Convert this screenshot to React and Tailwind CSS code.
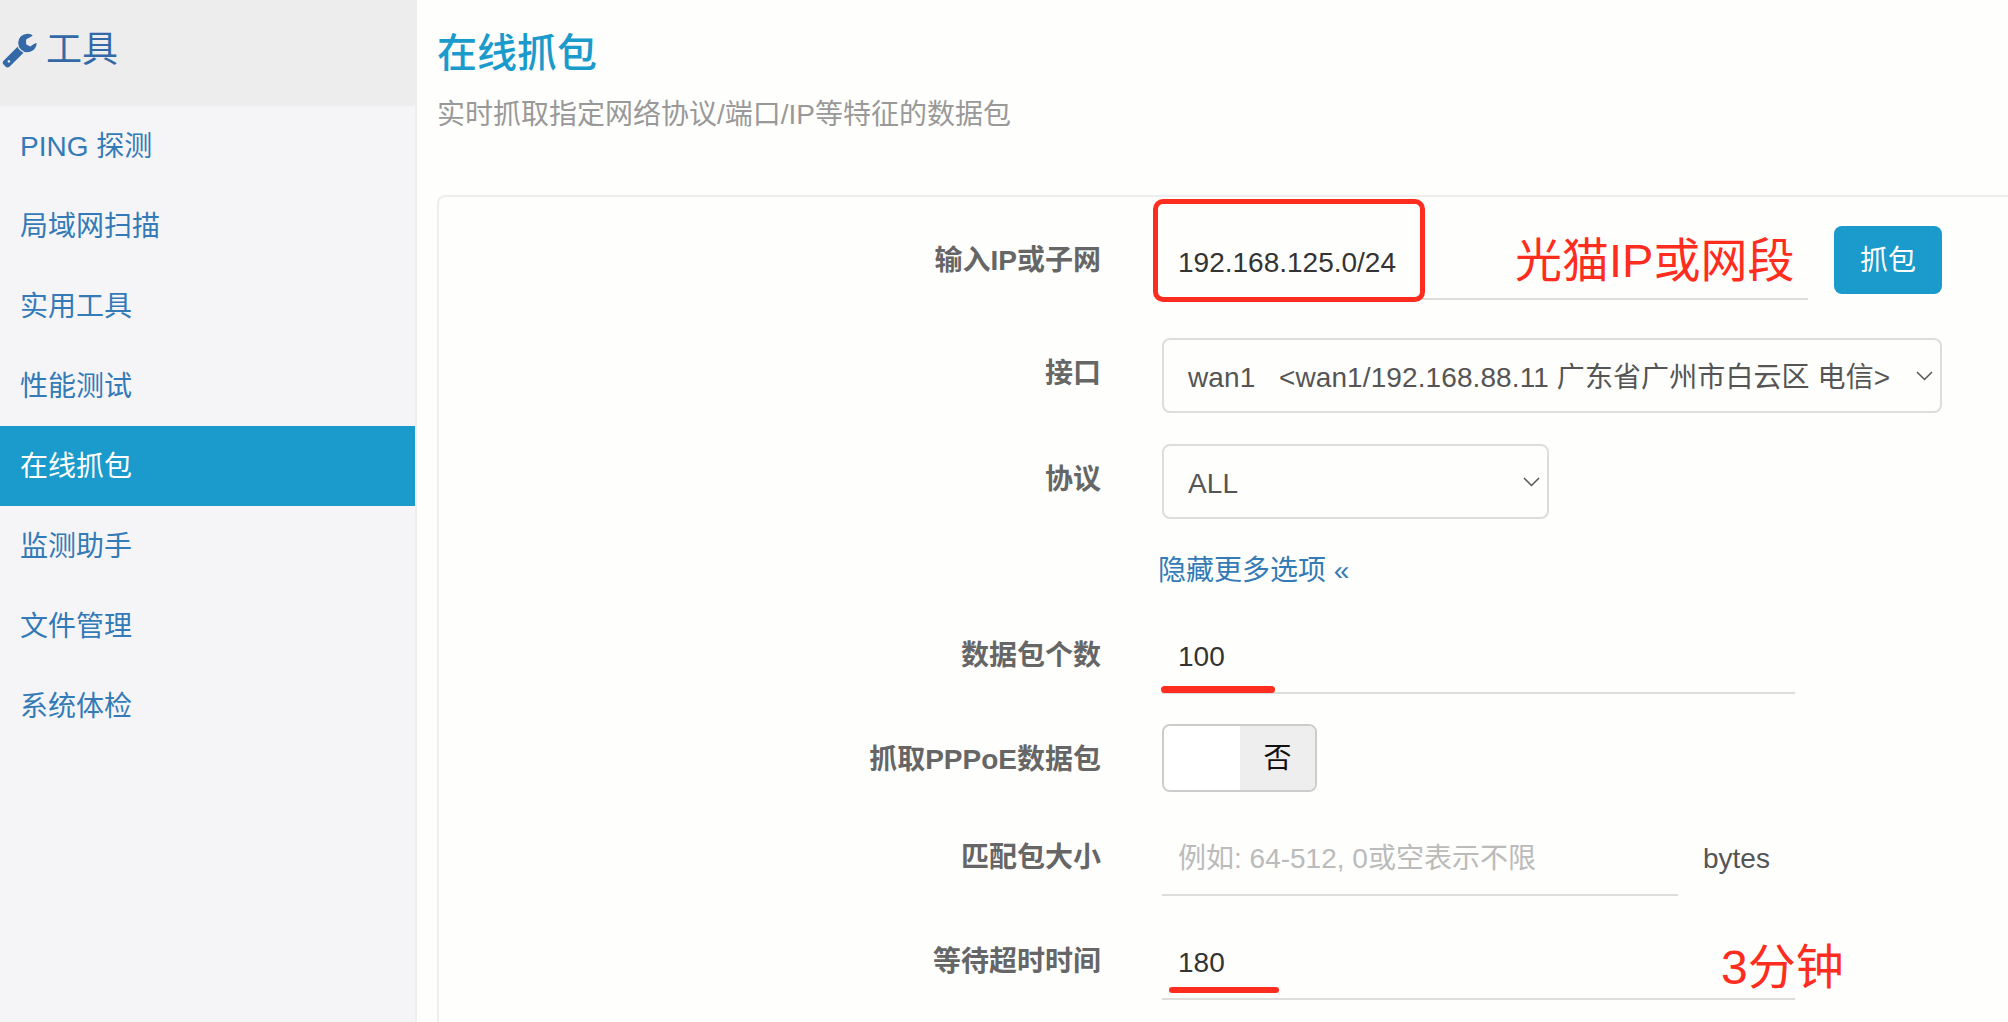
const font = { fontFamily: '"Liberation Sans", "Noto Sans CJK SC", sans-serif' };

const menu = ["PING 探测", "局域网扫描", "实用工具", "性能测试", "在线抓包", "监测助手", "文件管理", "系统体检"];

function WrenchIcon() {
  return (
    <svg width="37" height="37" viewBox="0 0 1792 1792" fill="currentColor" className="mb-[7px] mr-[8px] shrink-0">
      <path d="M448 1472q0-26-19-45t-45-19-45 19-19 45 19 45 45 19 45-19 19-45zm644-420l-682 682q-37 37-90 37-52 0-91-37l-106-108q-38-36-38-90 0-53 38-91l681-681q39 98 114.5 173.5t173.5 114.5zm634-435q0 39-23 106-47 134-164.5 217.5t-258.5 83.5q-185 0-316.5-131.5t-131.5-316.5 131.5-316.5 316.5-131.5q58 0 121.5 16.5t107.5 46.5q16 11 16 28t-16 28l-293 169v224l193 107q5-3 79-48.5t135.5-81 70.5-35.5q15 0 23.5 10t8.5 25z" />
    </svg>
  );
}

function Chevron() {
  return (
    <svg width="17" height="10" viewBox="0 0 17 10" fill="none" className="pointer-events-none absolute right-[9px] top-[33px]">
      <path d="M1 1 L8.5 8.5 L16 1" stroke="#555" strokeWidth="1.5" />
    </svg>
  );
}

function Row({ label, labelClass = "h-[72px]", children }) {
  return (
    <div className="flex items-start">
      <label className={`flex w-[662px] items-center justify-end text-[28px] font-bold text-[#666666] ${labelClass}`}>
        {label}
      </label>
      <div className="ml-[61px] flex items-start">{children}</div>
    </div>
  );
}

function TextInput({ width, value, placeholder }) {
  return (
    <input
      readOnly
      value={value}
      placeholder={placeholder}
      className={`h-[74px] ${width} border-b-2 border-[#dddddd] bg-transparent pl-[16px] pt-[1px] text-[28px] text-[#333333] outline-none placeholder:text-[#bbbbbb]`}
    />
  );
}

function Select({ width, children }) {
  return (
    <div className={`relative ${width}`}>
      <select className="h-[75px] w-full appearance-none rounded-[8px] border-2 border-[#dddddd] bg-transparent pl-[24px] pt-[5px] text-[28px] tracking-[0.1px] text-[#555555] outline-none">
        {children}
      </select>
      <Chevron />
    </div>
  );
}

export default function App() {
  return (
    <div className="flex h-[1022px] w-full overflow-hidden bg-[#fefefc]" style={font}>
      <aside className="h-full w-[417px] shrink-0 border-r-2 border-[#eeeeee] bg-[#f5f5f7]">
        <div className="flex h-[106px] items-center bg-[#ededed] pl-[1px] text-[36px] text-[#3469a8]">
          <WrenchIcon />
          <span className="mb-[7px]">工具</span>
        </div>
        <ul>
          {menu.map(item => (
            <li
              key={item}
              className={`flex h-[80px] items-center pl-[20px] pt-[2px] text-[28px] ${item === "在线抓包" ? "bg-[#1a9bcc] text-white" : "text-[#337ab7]"}`}
            >
              {item}
            </li>
          ))}
        </ul>
      </aside>

      <main className="min-w-0 flex-1 overflow-hidden pl-[20px] pt-[33px]">
        <h1 className="text-[40px] font-medium leading-[40px] text-[#1a9bcc]">在线抓包</h1>
        <p className="mt-[22px] text-[28px] leading-[40px] text-[#999999]">实时抓取指定网络协议/端口/IP等特征的数据包</p>

        <div className="mt-[60px] w-[1700px] rounded-t-[8px] border-x-2 border-t-2 border-[#eeeeee] pb-[100px] pt-[29px]">
          <Row label="输入IP或子网" labelClass="h-[70px]">
            <div className="relative">
              <TextInput width="w-[646px]" value="192.168.125.0/24" />
              <div className="absolute left-[-9px] top-[-27px] h-[103px] w-[272px] rounded-[10px] border-[5px] border-[#ff2d20]" />
              <span className="absolute left-[353px] top-[5px] whitespace-nowrap text-[47px] leading-[60px] text-[#ff2d20]">光猫IP或网段</span>
            </div>
            <button className="ml-[26px] h-[68px] w-[108px] rounded-[8px] bg-[#1a9bcc] pt-[2px] text-[28px] text-white">抓包</button>
          </Row>

          <div className="mt-[38px]">
            <Row label="接口">
              <Select width="w-[780px]">
                <option>wan1 &nbsp; &lt;wan1/192.168.88.11 广东省广州市白云区 电信&gt;</option>
              </Select>
            </Row>
          </div>

          <div className="mt-[31px]">
            <Row label="协议">
              <Select width="w-[387px]">
                <option>ALL</option>
              </Select>
            </Row>
          </div>

          <a className="ml-[719px] mt-[32px] block h-[39px] text-[28px] leading-[40px] text-[#337ab7]">隐藏更多选项 «</a>

          <div className="mt-[30px] flex flex-col gap-[30px]">
            <Row label="数据包个数">
              <div className="relative">
                <TextInput width="w-[633px]" value="100" />
                <div className="absolute bottom-[1px] left-[-1px] h-[7px] w-[114px] rounded-full bg-[#ff2d20]" />
              </div>
            </Row>

            <div className="h-[68px]">
              <Row label="抓取PPPoE数据包" labelClass="h-[70px] pt-[2px]">
                <div className="flex h-[68px] w-[155px] overflow-hidden rounded-[8px] border-2 border-[#cccccc]">
                  <div className="w-[76px] bg-white" />
                  <div className="flex flex-1 items-center justify-center bg-[#eeeeee] pt-[2px] text-[28px] text-[#111111]">否</div>
                </div>
              </Row>
            </div>

            <Row label="匹配包大小">
              <TextInput width="w-[516px]" placeholder="例如: 64-512, 0或空表示不限" />
              <span className="ml-[25px] mt-[17px] text-[28px] leading-[40px] text-[#555555]">bytes</span>
            </Row>

            <Row label="等待超时时间">
              <div className="relative">
                <TextInput width="w-[633px]" value="180" />
                <div className="absolute bottom-[7px] left-[7px] h-[6px] w-[110px] rounded-full bg-[#ff2d20]" />
                <span className="absolute left-[559px] top-[12px] whitespace-nowrap text-[48px] leading-[60px] text-[#ff2d20]">3分钟</span>
              </div>
            </Row>
          </div>
        </div>
      </main>
    </div>
  );
}
